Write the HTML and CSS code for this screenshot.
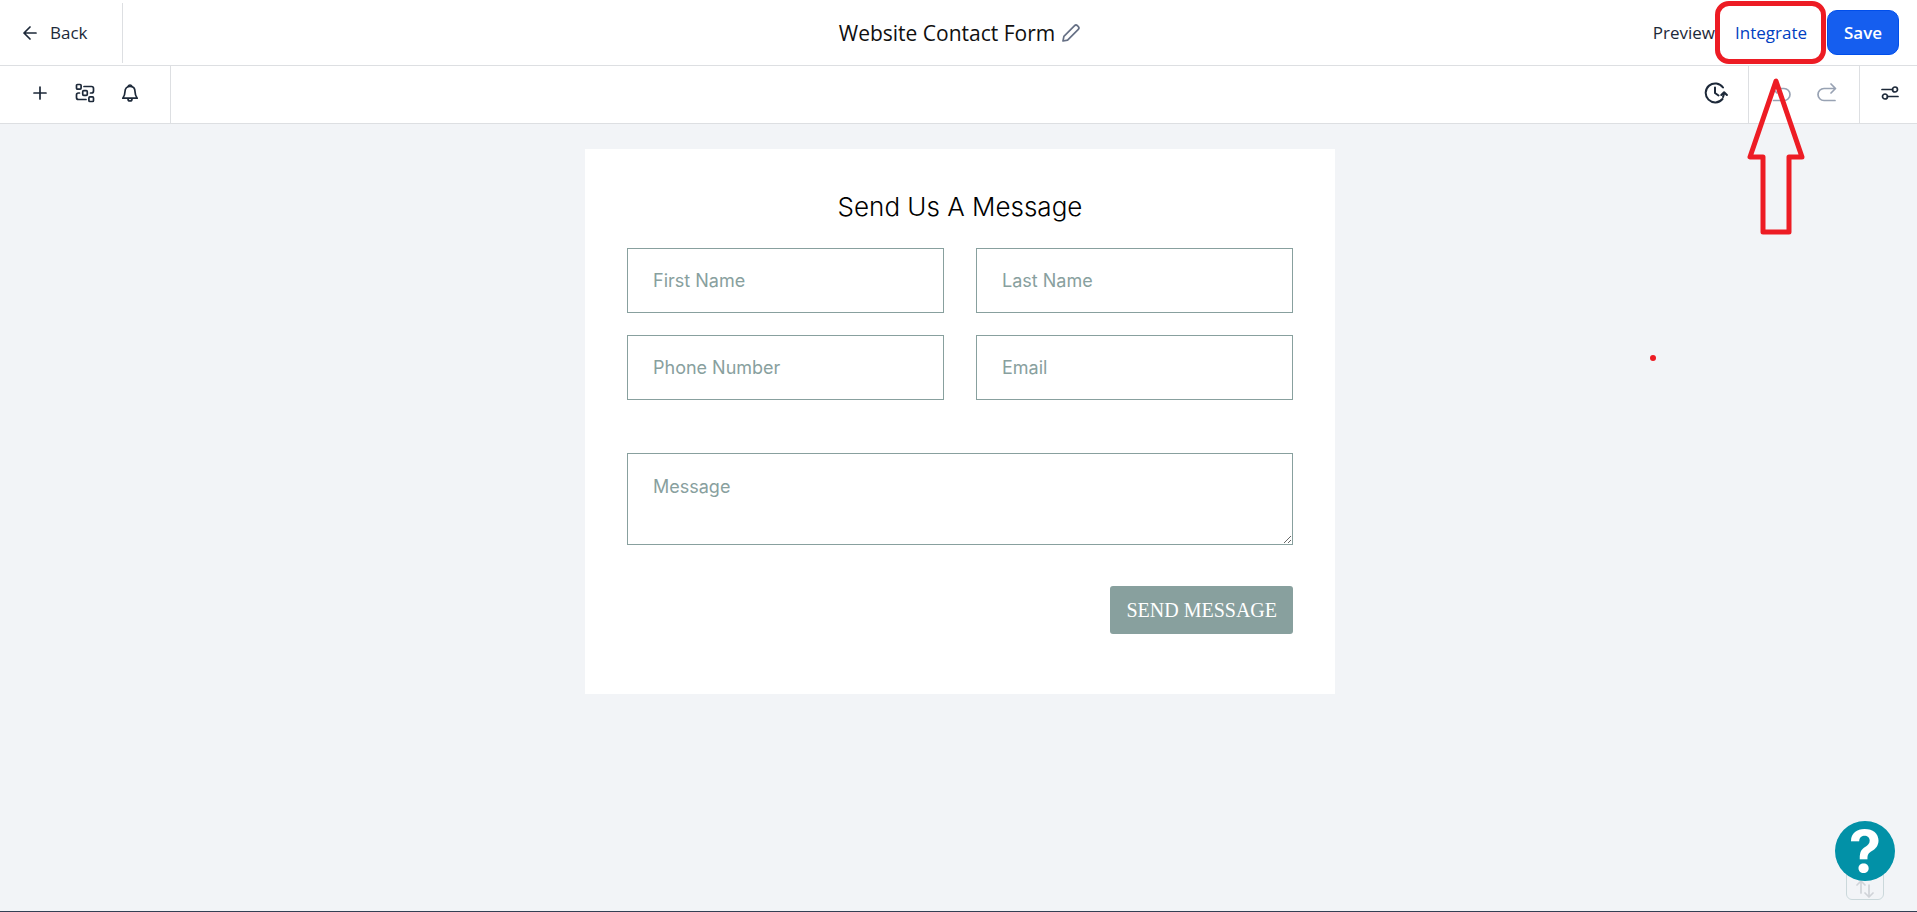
FILE: index.html
```html
<!DOCTYPE html>
<html lang="en">
  <head>
    <meta charset="UTF-8" />
    <meta name="viewport" content="width=device-width, initial-scale=1.0" />
    <title>Website Contact Form</title>
    <link rel="stylesheet" href="styles.css">
  </head>
  <body>
    <header class="topbar">
      <div class="topbar-left">
        <a class="back-link" href="#">
          <svg class="icon-back" width="14" height="14" viewBox="0 0 14 14"><path d="M13 7H1M7 1L1 7l6 6" /></svg>
          Back
        </a>
      </div>

      <div class="form-title">
        <h1>Website Contact Form</h1>
        <button class="icon-button" aria-label="Rename form">
          <svg class="icon-pencil" width="20" height="20" viewBox="0 0 20 20"><path d="M2 18l.9-4.600L13.600 2.700a2 2 0 0 1 2.800 0l.9.9a2 2 0 0 1 0 2.800L6.600 17.100z" /></svg>
        </button>
      </div>

      <div class="topbar-actions">
        <button class="text-button">Preview</button>
        <button class="text-button integrate-button">Integrate</button>
        <button class="save-button">Save</button>
      </div>
    </header>

    <div class="toolbar">
      <div class="tool-group tool-group-left">
        <button class="icon-button" aria-label="Add element">
          <svg class="icon-plus" width="20" height="20" viewBox="0 0 20 20"><path d="M10 4v12M4 10h12" /></svg>
        </button>
        <button class="icon-button" aria-label="Workflow">
          <svg width="20" height="20" viewBox="0 0 20 20">
            <rect x="1.500" y="1.500" width="4.600" height="4.600" rx="1" />
            <rect x="7.700" y="7.700" width="4.600" height="4.600" rx="1" />
            <rect x="13.900" y="13.900" width="4.600" height="4.600" rx="1" />
            <path d="M9 3.500h7.500a2 2 0 0 1 2 2V8a2 2 0 0 1-2 2h-1M4.500 10h-1a2 2 0 0 0-2 2v2.500a2 2 0 0 0 2 2H11" />
          </svg>
        </button>
        <button class="icon-button" aria-label="Notifications">
          <svg width="20" height="20" viewBox="0 0 20 20">
            <path d="M5 8.500C5 5.400 7 3.300 10 3.300s5 2.100 5 5.200c0 3.600 1 5 2.200 6.700H2.800C4 13.500 5 12.100 5 8.500z" />
            <path d="M8.200 3.300a1.900 1.900 0 0 1 3.600 0M8 16a2 2 0 0 0 4 0" />
          </svg>
        </button>
      </div>

      <div class="tool-group tool-group-history">
        <button class="icon-button" aria-label="Version history">
          <svg class="icon-history" width="24" height="22" viewBox="0 0 24 22">
            <path d="M19 5.500A9.500 9.500 0 1 0 18.500 17M11 5.500V11l3.500 2.500" />
            <path d="M17.300 13l2.800-2.800 2.800 2.800M20 11c0 1.500-.3 2.800-1 4" />
          </svg>
        </button>
      </div>
      <div class="tool-group tool-group-undo">
        <button class="icon-button" aria-label="Undo" disabled>
          <svg width="20" height="20" viewBox="0 0 20 20"><path d="M2 5.500h11a6 6 0 0 1 0 12H2.500M6 1L1.500 5.500 6 10" /></svg>
        </button>
        <button class="icon-button" aria-label="Redo" disabled>
          <svg width="20" height="20" viewBox="0 0 20 20"><path d="M18 5.500H7a6 6 0 0 0 0 12h11M14 1l4.500 4.500L14 10" /></svg>
        </button>
      </div>
      <div class="tool-group tool-group-settings">
        <button class="icon-button" aria-label="Settings">
          <svg width="18" height="14" viewBox="0 0 18 14">
            <circle cx="14" cy="3.500" r="2.500" /><circle cx="4" cy="10.500" r="2.500" />
            <path d="M1 3.500h10.500M6.500 10.500H17" />
          </svg>
        </button>
      </div>
    </div>

    <main class="canvas">
      <form class="contact-form">
        <h2>Send Us A Message</h2>
        <div class="field-grid">
          <input type="text" placeholder="First Name" aria-label="First Name" />
          <input type="text" placeholder="Last Name" aria-label="Last Name" />
          <input type="tel" placeholder="Phone Number" aria-label="Phone Number" />
          <input type="email" placeholder="Email" aria-label="Email" />
        </div>
        <textarea placeholder="Message" aria-label="Message"></textarea>
        <button type="submit" class="submit-button">SEND MESSAGE</button>
      </form>
    </main>

    <!-- Walkthrough markers -->
    <div class="marker-box"></div>
    <svg class="marker-arrow" width="58" height="158" viewBox="0 0 58 158">
      <path d="M29 3L3 79h13v75h26V79h13z" />
    </svg>
    <div class="marker-dot"></div>

    <button class="scroll-button" aria-label="Scroll">
      <svg width="18" height="18" viewBox="0 0 18 18"><path d="M5 13V1M1 5l4-4 4 4M13 5v12M9 13l4 4 4-4" /></svg>
    </button>
    <button class="help-button" aria-label="Help">?</button>
  </body>
</html>
```
FILE: styles.css
```css
* {
  margin: 0;
  padding: 0;
  box-sizing: border-box;
}

body {
  font-family: "Open Sans", "Noto Sans", sans-serif;
  background: #f2f4f7;
  min-height: 100vh;
  display: flex;
  flex-direction: column;
  position: relative;
  border-bottom: 1px solid #344054;
  color: #1d2939;
}

button {
  font-family: inherit;
  background: none;
  border: none;
  cursor: pointer;
}

svg {
  display: block;
  fill: none;
  stroke: currentColor;
  stroke-width: 1.7;
  stroke-linecap: round;
  stroke-linejoin: round;
}

/* Top bar */
.topbar {
  display: grid;
  grid-template-columns: 1fr auto 1fr;
  align-items: center;
  height: 66px;
  background: white;
  border-bottom: 1px solid #dddfe2;
}

.topbar-left {
  display: flex;
}

.back-link {
  display: flex;
  align-items: center;
  gap: 13px;
  width: 123px;
  height: 60px;
  padding-left: 23px;
  border-right: 1px solid #dddfe2;
  color: #1d2939;
  font-size: 17px;
  font-weight: 500;
  text-decoration: none;
}

.form-title {
  display: flex;
  align-items: center;
  gap: 6px;
  padding-left: 3px;
}

h1 {
  color: #101010;
  font-size: 21px;
  font-weight: 400;
}

.icon-pencil {
  color: #667085;
}

.topbar-actions {
  display: flex;
  align-items: center;
  justify-content: flex-end;
  gap: 20px;
  padding-right: 18px;
}

.text-button {
  color: #1d2939;
  font-size: 17px;
  font-weight: 500;
}

.integrate-button {
  color: #0040c1;
}

.save-button {
  width: 72px;
  height: 45px;
  background: #155eef;
  border: 1px solid #004eeb;
  border-radius: 10px;
  color: white;
  font-size: 17px;
  font-weight: 600;
}

/* Toolbar */
.toolbar {
  display: flex;
  height: 58px;
  background: white;
  border-bottom: 1px solid #dddfe2;
}

.tool-group {
  display: flex;
  align-items: center;
  padding-bottom: 4px;
}

.tool-group-left {
  gap: 25px;
  width: 171px;
  padding-left: 30px;
  border-right: 1px solid #dddfe2;
}

.tool-group-history {
  margin-left: auto;
  padding-right: 20px;
}

.icon-history {
  stroke-width: 2;
}

.tool-group-undo {
  gap: 26px;
  padding: 0 22px 4px;
  border-left: 1px solid #dddfe2;
}

.tool-group-settings {
  padding: 0 18px 4px 21px;
  border-left: 1px solid #dddfe2;
}

.icon-button {
  color: #1d2939;
}

.icon-button:disabled {
  color: #98a2b3;
  cursor: default;
}

/* Form preview */
.canvas {
  flex: 1;
  padding: 25px 24px 25px 27px;
}

.contact-form {
  display: flex;
  flex-direction: column;
  max-width: 750px;
  margin: 0 auto;
  padding: 37px 42px 60px;
  background: white;
}

h2 {
  margin-bottom: 20px;
  color: black;
  font-family: Inter, sans-serif;
  font-size: 26px;
  font-weight: 300;
  line-height: 42px;
  text-align: center;
}

.field-grid {
  display: grid;
  grid-template-columns: 1fr 1fr;
  gap: 22px 32px;
  margin-bottom: 53px;
}

input,
textarea {
  width: 100%;
  border: 1px solid #88a09e;
  background: white;
  color: #88a09e;
  font-family: Inter, sans-serif;
  font-size: 18px;
}

input {
  height: 65px;
  padding: 0 25px;
}

textarea {
  display: block;
  height: 92px;
  padding: 20px 25px;
  line-height: 26px;
  resize: vertical;
}

input::placeholder,
textarea::placeholder {
  color: #88a09e;
}

.submit-button {
  align-self: flex-end;
  height: 48px;
  margin-top: 41px;
  padding: 0 16px;
  background: #88a09e;
  border-radius: 3px;
  color: white;
  font-family: "Liberation Serif", serif;
  font-size: 20px;
}

/* Walkthrough markers */
.marker-box {
  position: absolute;
  top: 1px;
  right: 91px;
  width: 111px;
  height: 63px;
  border: 5px solid #ed1c24;
  border-radius: 14px;
  pointer-events: none;
}

.marker-arrow {
  position: absolute;
  top: 78px;
  right: 112px;
  color: #ed1c24;
  stroke-width: 5;
  pointer-events: none;
}

.marker-dot {
  position: absolute;
  top: 355px;
  right: 261px;
  width: 6px;
  height: 6px;
  border-radius: 50%;
  background: #ed1c24;
}

/* Floating buttons */
.scroll-button {
  position: fixed;
  right: 33px;
  bottom: 12px;
  display: flex;
  justify-content: center;
  align-items: flex-end;
  width: 38px;
  height: 38px;
  padding-bottom: 1px;
  border: 1px solid #cbd8db;
  border-radius: 6px;
  color: #d0d3d8;
}

.help-button {
  position: fixed;
  right: 22px;
  bottom: 31px;
  width: 60px;
  height: 60px;
  border-radius: 50%;
  background: #0291a7;
  color: white;
  font-family: Inter, sans-serif;
  font-size: 58px;
  font-weight: 700;
  line-height: 60px;
}
```
